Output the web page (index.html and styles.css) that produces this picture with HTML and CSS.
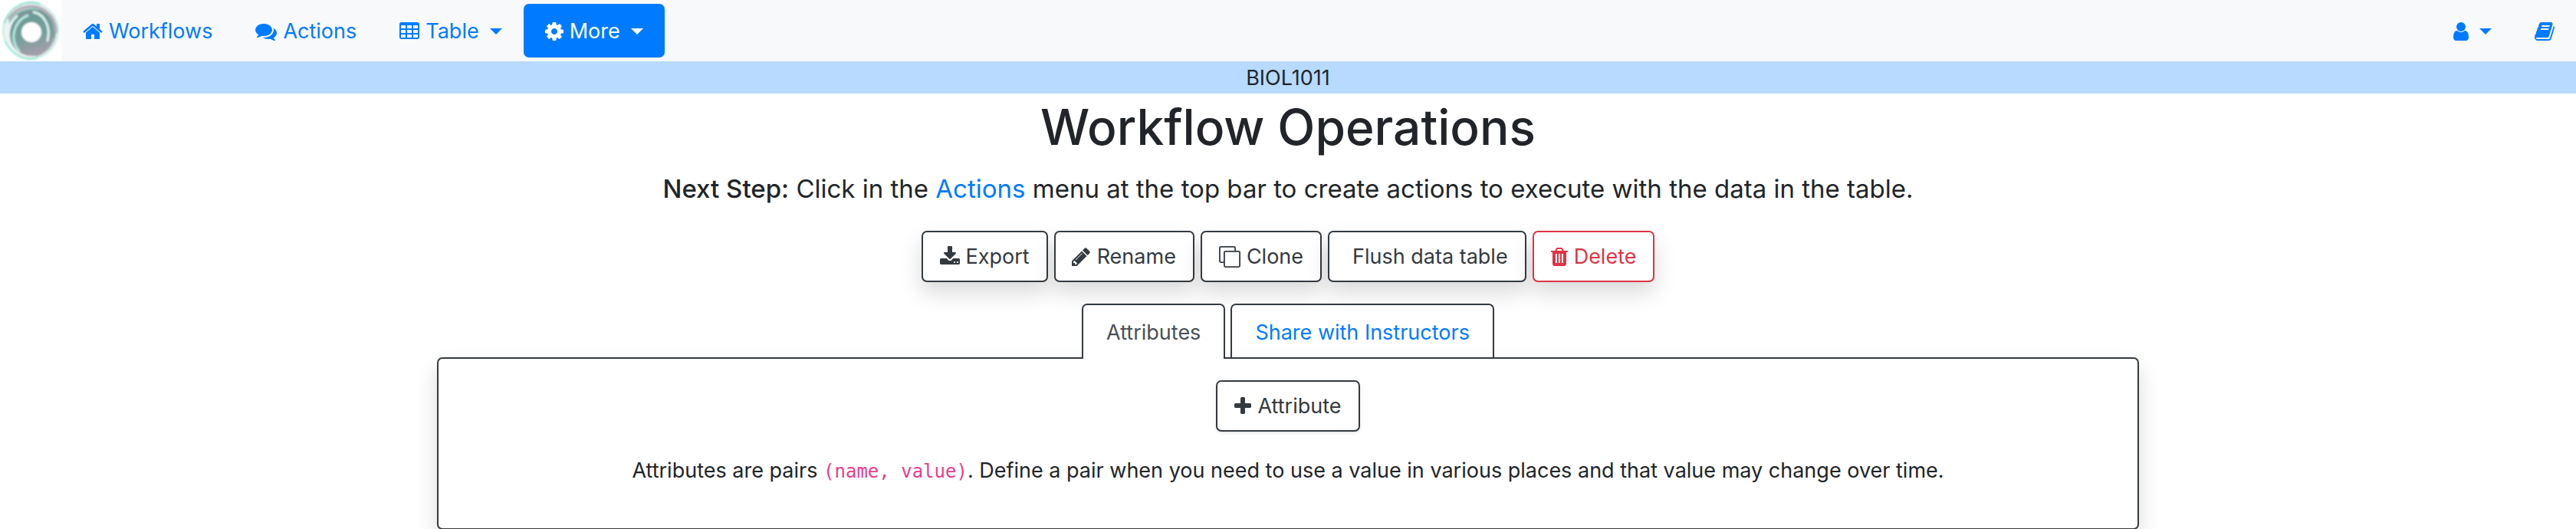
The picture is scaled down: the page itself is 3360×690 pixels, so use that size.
FILE: index.html
```html
<!DOCTYPE html>
<html lang="en">
<head>
<meta charset="utf-8">
<title>Workflow Operations</title>
<link rel="stylesheet" href="styles.css">
</head>
<body>
<header class="navbar">
  <a class="brand" href="#" aria-label="Home">
    <svg class="logo" viewBox="0 0 80 80" aria-hidden="true">
      <defs>
        <linearGradient id="disc" x1="0" y1="0" x2="0.3" y2="1">
          <stop offset="0" stop-color="#8f8f98"/>
          <stop offset="0.3" stop-color="#6d9c98"/>
          <stop offset="0.65" stop-color="#74a09c"/>
          <stop offset="1" stop-color="#a09da8"/>
        </linearGradient>
        <filter id="soft" x="-20%" y="-20%" width="140%" height="140%"><feGaussianBlur stdDeviation="0.9"/></filter>
      </defs>
      <rect width="80" height="80" fill="#fff"/>
      <g filter="url(#soft)" fill="none" stroke-linecap="round">
        <circle cx="40" cy="40" r="36" fill="#eef3f3" stroke="#bfeee2" stroke-width="2"/>
        <path d="M6 30A36 36 0 0 1 52 5" stroke="#8fdccb" stroke-width="2"/>
        <path d="M7 54A36 36 0 0 0 48 76" stroke="#8fe8d3" stroke-width="2"/>
        <circle cx="42" cy="42" r="31" fill="url(#disc)"/>
        <path d="M12 24A33 33 0 0 1 62 17Q72 25 73 41" stroke="#b3acb5" stroke-width="4"/>
        <path d="M12 29A33 33 0 0 1 50 13" stroke="#7fc5b8" stroke-width="2"/>
        <path d="M25 67A30 30 0 0 1 36 20" stroke="#b9e6df" stroke-width="3"/>
        <path d="M15 60A32 32 0 0 1 22 21" stroke="#e9f7f5" stroke-width="3"/>
        <path d="M44 16C57 18 67 34 62 53" stroke="#e0f2ef" stroke-width="3"/>
        <path d="M70 50A32 32 0 0 1 47 73" stroke="#b4aeb8" stroke-width="2"/>
        <circle cx="41" cy="42" r="13" fill="#fff"/>
      </g>
    </svg>
  </a>
  <nav class="nav-main" aria-label="Main">
    <a class="nav-link" href="#">
      <svg class="icon w26" viewBox="64 0 1664 1792" aria-hidden="true"><path d="M1472 992v480q0 26-19 45t-45 19h-384v-384h-256v384h-384q-26 0-45-19t-19-45v-480q0-1 .5-3t.5-3l575-474 575 474q1 2 1 6zm223-69l-62 74q-8 9-21 11h-3q-13 0-21-7l-692-577-692 577q-12 8-24 7-13-2-21-11l-62-74q-8-10-7-23.5t11-21.5l719-599q32-26 76-26t76 26l244 204v-195q0-14 9-23t23-9h192q14 0 23 9t9 23v408l219 182q10 8 11 21.5t-7 23.5z"/></svg>
      <span>Workflows</span>
    </a>
    <a class="nav-link" href="#">
      <svg class="icon w28" viewBox="0 0 1792 1792" aria-hidden="true"><path d="M1408 768q0 139-94 257t-256.5 186.5-353.5 68.5q-86 0-176-16-124 88-278 128-36 9-86 16h-3q-11 0-20.5-8t-11.5-21q-1-3-1-6.500t.5-6.500 2-6l2.500-5 3.500-5.500 4-5 4.500-5 4-4.500q5-6 23-25t26-29.500 22.500-29 25-38.500 20.500-44q-124-72-195-177t-71-224q0-139 94-257t256.500-186.500 353.500-68.500 353.500 68.500 256.500 186.500 94 257zm384 256q0 120-71 224.500t-195 176.500q10 24 20.500 44t25 38.500 22.500 29 26 29.500 23 25q1 1 4 4.500t4.500 5 4 5 3.500 5.500l2.500 5 2 6 .5 6.500-1 6.500q-3 14-13 22t-22 7q-50-7-86-16-154-40-278-128-90 16-176 16-271 0-472-132 58 4 88 4 161 0 309-45t264-129q125-92 192-212t67-254q0-77-23-152 129 71 204 178t75 230z"/></svg>
      <span>Actions</span>
    </a>
    <button class="nav-link" type="button" aria-haspopup="true">
      <svg class="icon w26" viewBox="64 0 1664 1792" aria-hidden="true"><path fill-rule="evenodd" d="M224 128h1344q66 0 113 47t47 113v1088q0 66-47 113t-113 47h-1344q-66 0-113-47t-47-113v-1088q0-66 47-113t113-47zM224 384h320q32 0 32 32v192q0 32-32 32h-320q-32 0-32-32v-192q0-32 32-32zM736 384h320q32 0 32 32v192q0 32-32 32h-320q-32 0-32-32v-192q0-32 32-32zM1248 384h320q32 0 32 32v192q0 32-32 32h-320q-32 0-32-32v-192q0-32 32-32zM224 768h320q32 0 32 32v192q0 32-32 32h-320q-32 0-32-32v-192q0-32 32-32zM736 768h320q32 0 32 32v192q0 32-32 32h-320q-32 0-32-32v-192q0-32 32-32zM1248 768h320q32 0 32 32v192q0 32-32 32h-320q-32 0-32-32v-192q0-32 32-32zM224 1152h320q32 0 32 32v192q0 32-32 32h-320q-32 0-32-32v-192q0-32 32-32zM736 1152h320q32 0 32 32v192q0 32-32 32h-320q-32 0-32-32v-192q0-32 32-32zM1248 1152h320q32 0 32 32v192q0 32-32 32h-320q-32 0-32-32v-192q0-32 32-32z"/></svg>
      <span>Table</span><i class="caret"></i>
    </button>
    <button class="nav-link active" type="button" aria-haspopup="true">
      <svg class="icon w24" viewBox="128 0 1536 1792" aria-hidden="true"><path d="M1152 896q0-106-75-181t-181-75-181 75-75 181 75 181 181 75 181-75 75-181zm512-109v222q0 12-8 23t-20 13l-185 28q-19 54-39 91 35 50 107 138 10 12 10 25t-9 23q-27 37-99 108t-94 71q-12 0-26-9l-138-108q-44 23-91 38-16 136-29 186-7 28-36 28h-222q-14 0-24.500-8.500t-11.500-21.500l-28-184q-49-16-90-37l-141 107q-10 9-25 9-14 0-25-11-126-114-165-168-7-10-7-23 0-12 8-23 15-21 51-66.500t54-70.500q-27-50-41-99l-183-27q-13-2-21-12.500t-8-23.500v-222q0-12 8-23t19-13l186-28q14-46 39-92-40-57-107-138-10-12-10-24 0-10 9-23 26-36 98.500-107.500t94.500-71.500q13 0 26 10l138 107q44-23 91-38 16-136 29-186 7-28 36-28h222q14 0 24.500 8.500t11.500 21.500l28 184q49 16 90 37l142-107q9-9 24-9 13 0 25 10 129 119 165 170 7 8 7 22 0 12-8 23-15 21-51 66.500t-54 70.500q26 50 41 98l183 28q13 2 21 12.500t8 23.500z"/></svg>
      <span>More</span><i class="caret"></i>
    </button>
  </nav>
  <nav class="nav-side" aria-label="Account">
    <button class="nav-link" type="button" aria-haspopup="true" aria-label="Account">
      <svg class="icon w20" viewBox="256 0 1280 1792" aria-hidden="true"><path d="M1536 1399q0 109-62.500 187t-150.500 78h-854q-88 0-150.500-78t-62.500-187q0-85 8.500-160.500t31.500-152 58.500-131 94-89 134.500-34.500q131 128 313 128t313-128q76 0 134.500 34.500t94 89 58.500 131 31.500 152 8.500 160.500zm-256-887q0 159-112.500 271.500t-271.500 112.500-271.500-112.500-112.500-271.500 112.500-271.500 271.500-112.500 271.500 112.500 112.500 271.500z"/></svg>
      <i class="caret"></i>
    </button>
    <a class="nav-link" href="#" aria-label="Documentation">
      <svg class="icon w26" viewBox="64 0 1664 1792" aria-hidden="true"><path d="M1703 478q40 57 18 129l-275 906q-19 64-76.500 107.500t-122.500 43.500h-923q-77 0-148.500-53.500t-99.500-131.500q-24-67-2-127 0-4 3-27t4-37q1-8-3-21.500t-3-19.500q2-11 8-21t16.500-23.500 16.500-23.500q23-38 45-91.500t30-91.500q3-10 .5-30t-.5-28q3-11 17-28t17-23q21-36 42-92t25-90q1-9-2.500-32t.5-28q4-13 22-30.500t22-22.500q19-26 42.500-84.500t27.500-96.500q1-8-3-25.500t-2-26.500q2-8 9-18t18-23 17-21q8-12 16.500-30.500t15-35 16-36 19.500-32 26.500-23.500 36-11.500 47.500 5.500l-1 3q38-9 51-9h761q74 0 114 56t18 130l-274 906q-36 119-71.500 153.500t-128.500 34.500h-869q-27 0-38 15-11 16-1 43 24 70 144 70h923q29 0 56-15.500t35-41.500l300-987q7-22 5-57 38 15 59 43zm-1064 2q-4 13 2 22.500t20 9.500h608q13 0 25.500-9.500t16.500-22.500l21-64q4-13-2-22.500t-20-9.500h-608q-13 0-25.500 9.500t-16.500 22.500zm-83 256q-4 13 2 22.500t20 9.500h608q13 0 25.500-9.500t16.500-22.500l21-64q4-13-2-22.500t-20-9.500h-608q-13 0-25.500 9.500t-16.500 22.500z"/></svg>
    </a>
  </nav>
</header>
<div class="workflow-name">BIOL1011</div>
<main class="container">
  <h1 class="title">Workflow Operations</h1>
  <p class="lead"><b>Next Step:</b> Click in the <a href="#">Actions</a> menu at the top bar to create actions to execute with the data in the table.</p>
  <div class="toolbar">
    <button class="btn" type="button">
      <svg class="icon w26" viewBox="64 0 1664 1792" aria-hidden="true"><path d="M1344 1344q0-26-19-45t-45-19-45 19-19 45 19 45 45 19 45-19 19-45zm256 0q0-26-19-45t-45-19-45 19-19 45 19 45 45 19 45-19 19-45zm128-224v320q0 40-28 68t-68 28h-1472q-40 0-68-28t-28-68v-320q0-40 28-68t68-28h465l135 136q58 56 136 56t136-56l136-136h464q40 0 68 28t28 68zm-325-569q17 41-14 70l-448 448q-18 19-45 19t-45-19l-448-448q-31-29-14-70 17-39 59-39h256v-448q0-26 19-45t45-19h256q26 0 45 19t19 45v448h256q42 0 59 39z"/></svg>
      <span>Export</span>
    </button>
    <button class="btn" type="button">
      <svg class="icon w24" viewBox="192 0 1536 1792" aria-hidden="true"><path d="M491 1536l91-91-235-235-91 91v107h128v128h107zm523-928q0-22-22-22-10 0-17 7l-542 542q-7 7-7 17 0 22 22 22 10 0 17-7l542-542q7-7 7-17zm-54-192l416 416-832 832h-416v-416zm683 96q0 53-37 90l-166 166-416-416 166-165q36-38 90-38 53 0 91 38l235 234q37 39 37 91z"/></svg>
      <span>Rename</span>
    </button>
    <button class="btn" type="button">
      <svg class="icon w28" viewBox="0 0 1792 1792" aria-hidden="true"><g fill="none" stroke="currentColor" stroke-width="116"><rect x="442" y="442" width="1292" height="1292" rx="96"/><path d="M1350 380V154Q1350 58 1254 58H154Q58 58 58 154V1254Q58 1350 154 1350H380"/></g></svg>
      <span>Clone</span>
    </button>
    <button class="btn" type="button">
      <span class="icon-slot"></span>
      <span>Flush data table</span>
    </button>
    <button class="btn danger" type="button">
      <svg class="icon w22" viewBox="192 0 1408 1792" aria-hidden="true"><path d="M704 1376v-704q0-14-9-23t-23-9h-64q-14 0-23 9t-9 23v704q0 14 9 23t23 9h64q14 0 23-9t9-23zm256 0v-704q0-14-9-23t-23-9h-64q-14 0-23 9t-9 23v704q0 14 9 23t23 9h64q14 0 23-9t9-23zm256 0v-704q0-14-9-23t-23-9h-64q-14 0-23 9t-9 23v704q0 14 9 23t23 9h64q14 0 23-9t9-23zm-544-992h448l-48-117q-7-9-17-11h-317q-10 2-17 11zm928 32v64q0 14-9 23t-23 9h-96v948q0 83-47 143.500t-113 60.500h-832q-66 0-113-58.500t-47-141.500v-952h-96q-14 0-23-9t-9-23v-64q0-14 9-23t23-9h309l70-167q15-37 54-63t79-26h320q40 0 79 26t54 63l70 167h309q14 0 23 9t9 23z"/></svg>
      <span>Delete</span>
    </button>
  </div>
  <nav class="tabs" aria-label="Sections">
    <a class="tab current" href="#attributes" aria-current="page">Attributes</a>
    <a class="tab" href="#share">Share with Instructors</a>
  </nav>
  <section class="card" id="attributes">
    <button class="btn flat" type="button">
      <svg class="icon w22" viewBox="192 0 1408 1792" aria-hidden="true"><path d="M1600 736v192q0 40-28 68t-68 28h-416v416q0 40-28 68t-68 28h-192q-40 0-68-28t-28-68v-416h-416q-40 0-68-28t-28-68v-192q0-40 28-68t68-28h416v-416q0-40 28-68t68-28h192q40 0 68 28t28 68v416h416q40 0 68 28t28 68z"/></svg>
      <span>Attribute</span>
    </button>
    <p class="hint">Attributes are pairs <code>(name, value)</code>. Define a pair when you need to use a value in various places and that value may change over time.</p>
  </section>
</main>
</body>
</html>
```
FILE: styles.css
```css
* {
  box-sizing: border-box;
}

body {
  margin: 0;
  background: #fff;
  color: #212529;
  font-family: Inter, "Liberation Sans", sans-serif;
  font-size: 27px;
  line-height: 42px;
}

a {
  color: #007bff;
  text-decoration: none;
}

button {
  font: inherit;
  cursor: pointer;
}

.navbar {
  display: flex;
  align-items: center;
  background: #f8f9fa;
}

.brand,
.logo {
  display: block;
  width: 80px;
  height: 80px;
}

.nav-main,
.nav-side {
  display: flex;
}

.nav-side {
  margin-left: auto;
}

.nav-link {
  display: flex;
  align-items: center;
  gap: 8px;
  padding: 15px 28px 13px;
  border: 0;
  border-radius: 7px;
  background: none;
  color: #007bff;
}

.nav-link.active {
  background: #007bff;
  color: #fff;
}

.caret {
  margin-left: 6px;
  border: 8px solid transparent;
  border-top-color: currentColor;
  border-bottom: 0;
}

.icon {
  flex: none;
  height: 28px;
  fill: currentColor;
  overflow: visible;
}

.w20 { width: 20px; }
.w22 { width: 22px; }
.w24 { width: 24px; }
.w26 { width: 26px; }
.w28 { width: 28px; }

.workflow-name {
  padding-top: 2px;
  background: #b8daff;
  line-height: 40px;
  text-align: center;
}

.container {
  max-width: 2220px;
  margin: 0 auto;
}

.title {
  margin: 0 0 10px;
  font-size: 64px;
  font-weight: 500;
  line-height: 88px;
  text-align: center;
}

.lead {
  margin: 0 0 28px;
  font-size: 33px;
  line-height: 53px;
  text-align: center;
}

.lead b {
  font-weight: 500;
}

.toolbar {
  display: flex;
  justify-content: center;
  gap: 8px;
  margin-bottom: 28px;
}

.btn {
  display: flex;
  align-items: center;
  gap: 8px;
  padding: 11px 22px 10px;
  border: 2px solid #343a40;
  border-radius: 7px;
  background: #fff;
  color: #343a40;
  box-shadow: 0 14px 28px rgba(0, 0, 0, 0.15);
}

.btn.danger {
  border-color: #dc3545;
  color: #dc3545;
}

.btn.flat {
  box-shadow: 0 2px 4px rgba(0, 0, 0, 0.1);
}

.tabs {
  display: flex;
  justify-content: center;
  gap: 7px;
  margin-bottom: -2px;
}

.tab {
  padding: 15px 30px 13px;
  border: 2px solid #343a40;
  border-bottom: 0;
  border-radius: 7px 7px 0 0;
}

.tab.current {
  position: relative;
  z-index: 1;
  background: #fff;
  color: #495057;
}

.card {
  display: flex;
  flex-direction: column;
  align-items: center;
  gap: 30px;
  padding: 28px 28px 53px;
  border: 2px solid #343a40;
  border-radius: 7px;
  background: #fff;
  box-shadow: 0 14px 28px rgba(0, 0, 0, 0.15);
}

.hint {
  margin: 0;
  text-align: center;
}

.hint code {
  color: #e83e8c;
  font-family: "DejaVu Sans Mono", "Liberation Mono", monospace;
  font-size: 24px;
}
```
